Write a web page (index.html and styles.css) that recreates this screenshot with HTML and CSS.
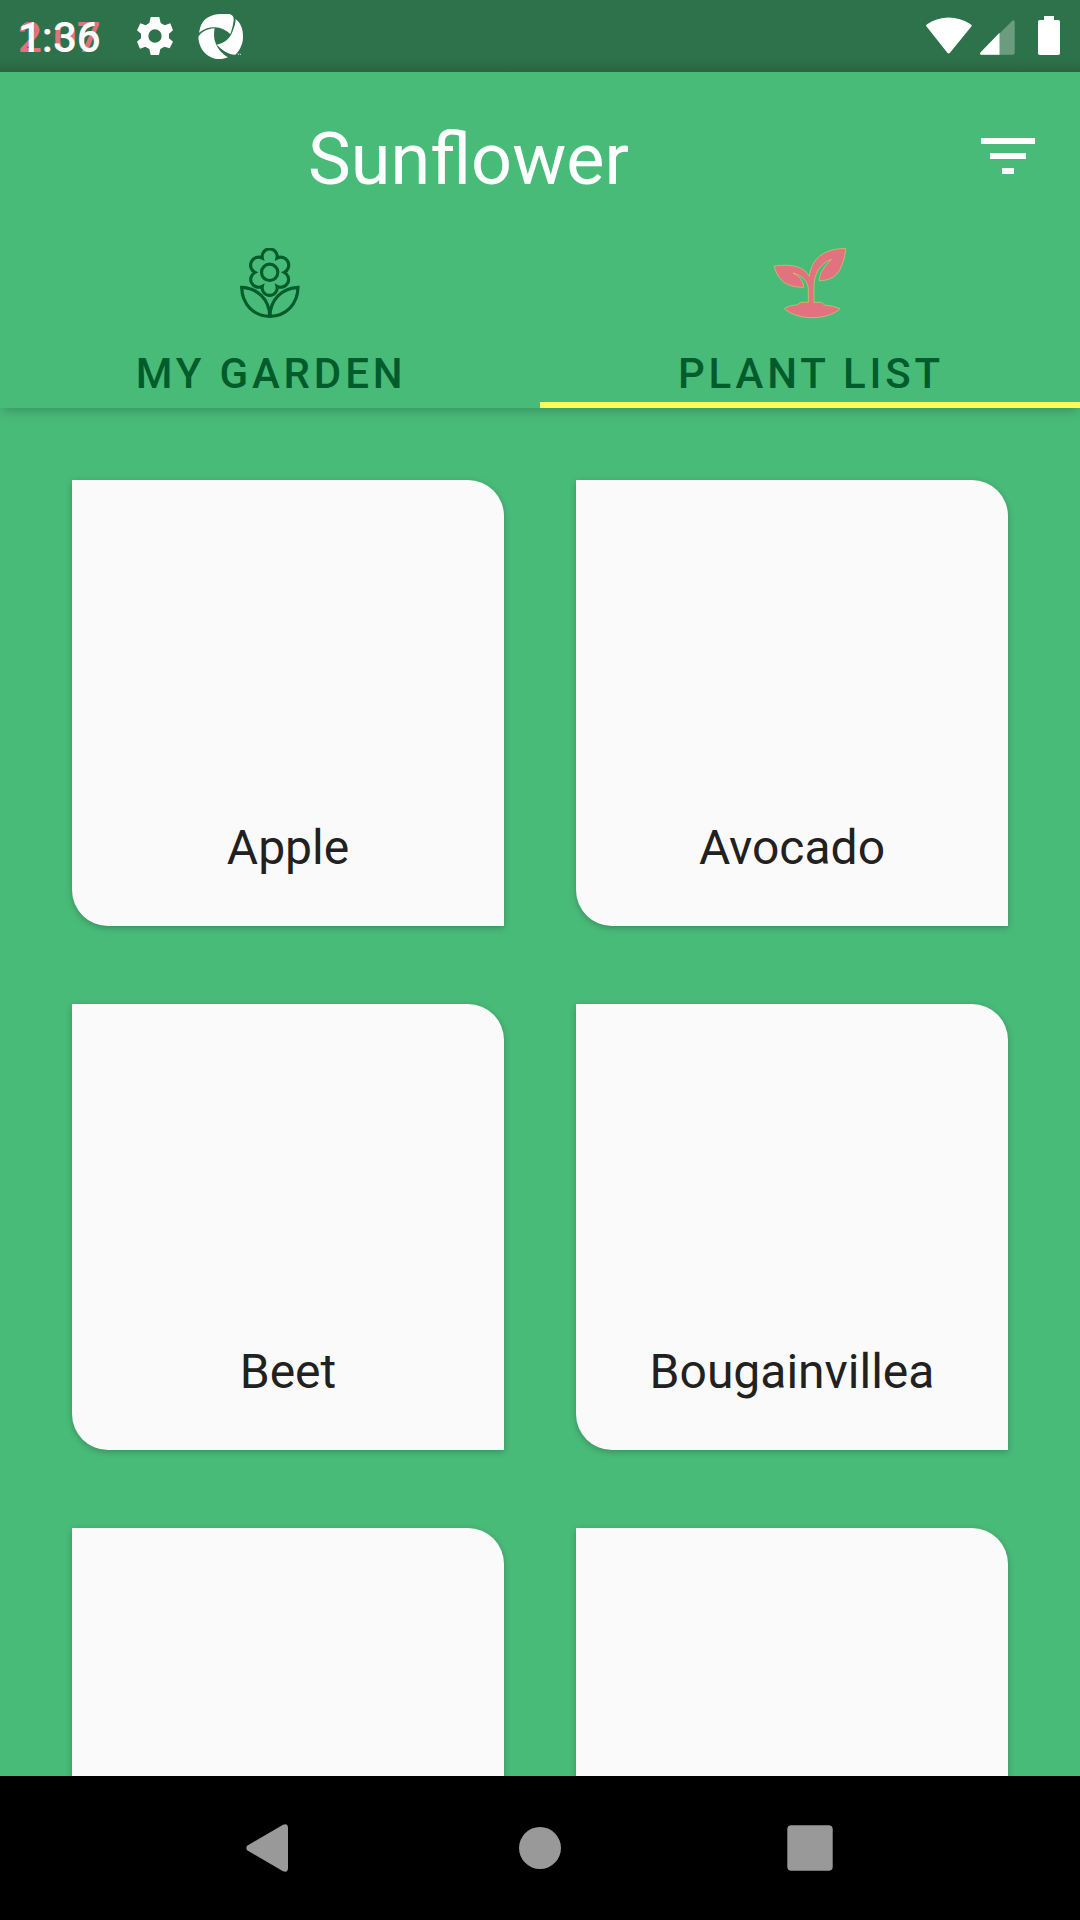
FILE: index.html
```html
<!DOCTYPE html>
<html lang="en">
<head>
<meta charset="utf-8">
<title>Sunflower</title>
<link rel="stylesheet" href="styles.css">
</head>
<body>
<div class="screen">
  <header class="status-bar">
    <div class="clock">
      <span class="clock-previous">2:07</span>
      <span class="clock-current">1:36</span>
    </div>
    <svg class="icon-gear" viewBox="411 51 108 114"><path fill-rule="evenodd" d="M452 51H478L482 69L494 76L511 70L519 91L507 101V115L519 125L509 145L493 140L481 147L477 165H452L448 147L436 140L420 146L411 125L423 115V101L411 91L421 70L437 76L448 69ZM465 88A20 20 0 1 0 465 128A20 20 0 1 0 465 88Z"/></svg>
    <svg class="icon-ball" viewBox="594 41 135 135"><path d="M600 84C606 57 632 41 662 41H688C699 44 702 50 701 60C699 75 696 89 691 101C675 88 661 81 646 81C629 80 613 85 597 97ZM707 56C721 67 729 84 729 106C730 130 719 151 706 163C688 164 668 151 650 133C673 129 690 114 697 95C703 81 707 68 707 56ZM595 109C606 93 623 85 644 84C641 101 641 116 648 131C655 149 670 163 684 171C671 177 652 178 638 173C612 163 596 139 595 109Z"/><path d="M711 160H716V164H714V162ZM718 160H722V164H720V162Z"/></svg>
    <div class="system-icons">
      <svg class="icon-wifi" viewBox="77 50 138 110"><path d="M78 77Q76 74 80 71C120 44 170 44 211 71Q216 74 213 78L149 157Q145 161 141 157Z"/></svg>
      <svg class="icon-signal" viewBox="239 59 104 104"><path opacity=".3" d="M335 61Q342 57 342 65V157Q342 162 337 162H243Q237 161 241 155Z"/><path d="M297 97V162H243Q237 161 241 155Z"/></svg>
      <svg class="icon-battery" viewBox="414 48 66 117"><path d="M432 48H462V60H475Q480 60 480 65V160Q480 165 475 165H419Q414 165 414 160V65Q414 60 419 60H432Z"/></svg>
    </div>
  </header>

  <div class="app-bar">
    <div class="toolbar">
      <h1 class="title">Sunflower</h1>
      <svg class="icon-filter" viewBox="0 0 24 24"><path d="M10 18h4v-2h-4v2zM3 6v2h18V6H3zm3 7h12v-2H6v2z"/></svg>
    </div>
    <nav class="tabs">
      <div class="tab">
        <svg class="tab-icon flower" viewBox="42 38 216 216">
          <circle cx="149" cy="111" r="24.500"/>
          <path d="M127 68A22.500 22.500 0 1 1 171 68A23 23 0 1 1 193 111A23 23 0 1 1 171 153A22.500 22.500 0 1 1 127 153A23 23 0 1 1 105 111A23 23 0 1 1 127 68Z"/>
          <path d="M65 156C111 158 149 192 149 243C101 242 66 207 65 156ZM234 156C188 158 150 192 150 243C198 242 233 207 234 156Z"/>
        </svg>
        <span class="tab-label">MY GARDEN</span>
      </div>
      <div class="tab tab-active">
        <svg class="tab-icon sprout" viewBox="42 39 216 216">
          <path d="M42 93C80 88 128 88 148 124C154 74 187 41 258 40C249 99 233 137 178 137C178 116 189 99 214 73C178 88 164 115 162 151V202H185L195 211C210 211 225 215 240 221C203 257 112 257 73 221C84 214 96 210 110 210L123 202H145V164C144 139 128 121 99 115L103 115C122 128 130 140 131 157C82 156 57 142 42 93Z"/>
        </svg>
        <span class="tab-label">PLANT LIST</span>
      </div>
    </nav>
  </div>

  <main class="plant-grid">
    <article class="card"><span class="plant-name">Apple</span></article>
    <article class="card"><span class="plant-name">Avocado</span></article>
    <article class="card"><span class="plant-name">Beet</span></article>
    <article class="card"><span class="plant-name">Bougainvillea</span></article>
    <article class="card"></article>
    <article class="card"></article>
  </main>

  <footer class="nav-bar">
    <div class="nav-button"><svg class="nav-icon" viewBox="0 0 48 48"><path d="M1.500 21.500 37 .8Q42 -1 42 4V44Q42 49 37 47.200L1.500 26.500Q-1 24 1.500 21.500Z"/></svg></div>
    <div class="nav-button"><svg class="nav-icon" viewBox="0 0 48 48"><circle cx="24" cy="24" r="21"/></svg></div>
    <div class="nav-button"><svg class="nav-icon" viewBox="0 0 48 48"><rect x="1.300" y="1.300" width="45.400" height="45.400" rx="4"/></svg></div>
  </footer>
</div>
</body>
</html>
```
FILE: styles.css
```css
* {
  box-sizing: border-box;
}

body {
  margin: 0;
  font-family: Roboto, sans-serif;
}

svg {
  display: block;
  flex: none;
}

.screen {
  display: flex;
  flex-direction: column;
  width: 1080px;
  height: 1920px;
  overflow: hidden;
  background: #49bb79;
}

/* Status bar */
.status-bar {
  display: flex;
  flex: none;
  height: 72px;
  padding-left: 18px;
  padding-right: 20px;
  background: linear-gradient(#2d724a 58px, #2a6543);
  fill: #fff;
}

.clock {
  display: grid;
  width: 119px;
  padding-top: 13px;
  font-size: 42px;
  font-weight: 500;
  line-height: 50px;
}

.clock-previous,
.clock-current {
  grid-area: 1 / 1;
}

.clock-previous {
  color: #e2727f;
}

.clock-current {
  color: #fff;
}

.icon-gear {
  width: 36px;
  height: 38px;
  margin-top: 17px;
}

.icon-ball {
  width: 45px;
  height: 45px;
  margin: 14px 0 0 25px;
}

.system-icons {
  display: flex;
  margin-left: auto;
}

.icon-wifi {
  width: 46px;
  height: 37px;
  margin-top: 17px;
}

.icon-signal {
  width: 35px;
  height: 35px;
  margin: 20px 0 0 8px;
}

.icon-battery {
  width: 22px;
  height: 39px;
  margin: 16px 0 0 23px;
}

/* App bar */
.app-bar {
  position: relative;
  z-index: 1;
  flex: none;
  height: 336px;
  background: #49bb79;
  box-shadow: 0 6px 10px -2px rgba(0, 0, 0, 0.18);
}

.toolbar {
  display: flex;
  align-items: center;
  justify-content: space-between;
  height: 168px;
  padding: 0 36px 0 308px;
}

.title {
  margin: 8px 0 0;
  color: #fff;
  font-size: 72px;
  font-weight: 400;
  line-height: 84px;
}

.icon-filter {
  width: 72px;
  height: 72px;
  fill: #fff;
}

.tabs {
  display: flex;
  height: 168px;
}

.tab {
  display: flex;
  flex: 1;
  flex-direction: column;
  align-items: center;
  padding-top: 8px;
}

.tab-active {
  border-bottom: 6px solid #fffb5c;
}

.tab-icon {
  width: 72px;
  height: 72px;
}

.flower {
  fill: none;
  stroke: #005d2b;
  stroke-width: 9.5;
}

.sprout {
  fill: #e2727f;
  stroke: #e0e060;
  stroke-width: 1.5;
}

.tab-label {
  margin: 29px 0 0 2px;
  color: #005d2b;
  font-size: 42px;
  font-weight: 500;
  letter-spacing: 3.85px;
  line-height: 50px;
}

/* Plant grid */
.plant-grid {
  display: grid;
  flex: 1;
  grid-template-columns: 432px 432px;
  grid-auto-rows: 446px;
  gap: 78px 72px;
  min-height: 0;
  padding: 72px 72px 0;
  overflow: hidden;
}

.card {
  display: flex;
  align-items: flex-end;
  justify-content: center;
  padding-bottom: 50px;
  border-radius: 0 36px 0 36px;
  background: #fafafa;
  box-shadow: 0 2px 7px rgba(0, 0, 0, 0.24);
}

.plant-name {
  color: #212121;
  font-size: 48px;
  line-height: 56px;
}

/* Navigation bar */
.nav-bar {
  display: flex;
  flex: none;
  justify-content: center;
  height: 144px;
  background: #000;
}

.nav-button {
  display: flex;
  align-items: center;
  justify-content: center;
  width: 270px;
}

.nav-icon {
  width: 48px;
  height: 48px;
  fill: #999;
}
```
